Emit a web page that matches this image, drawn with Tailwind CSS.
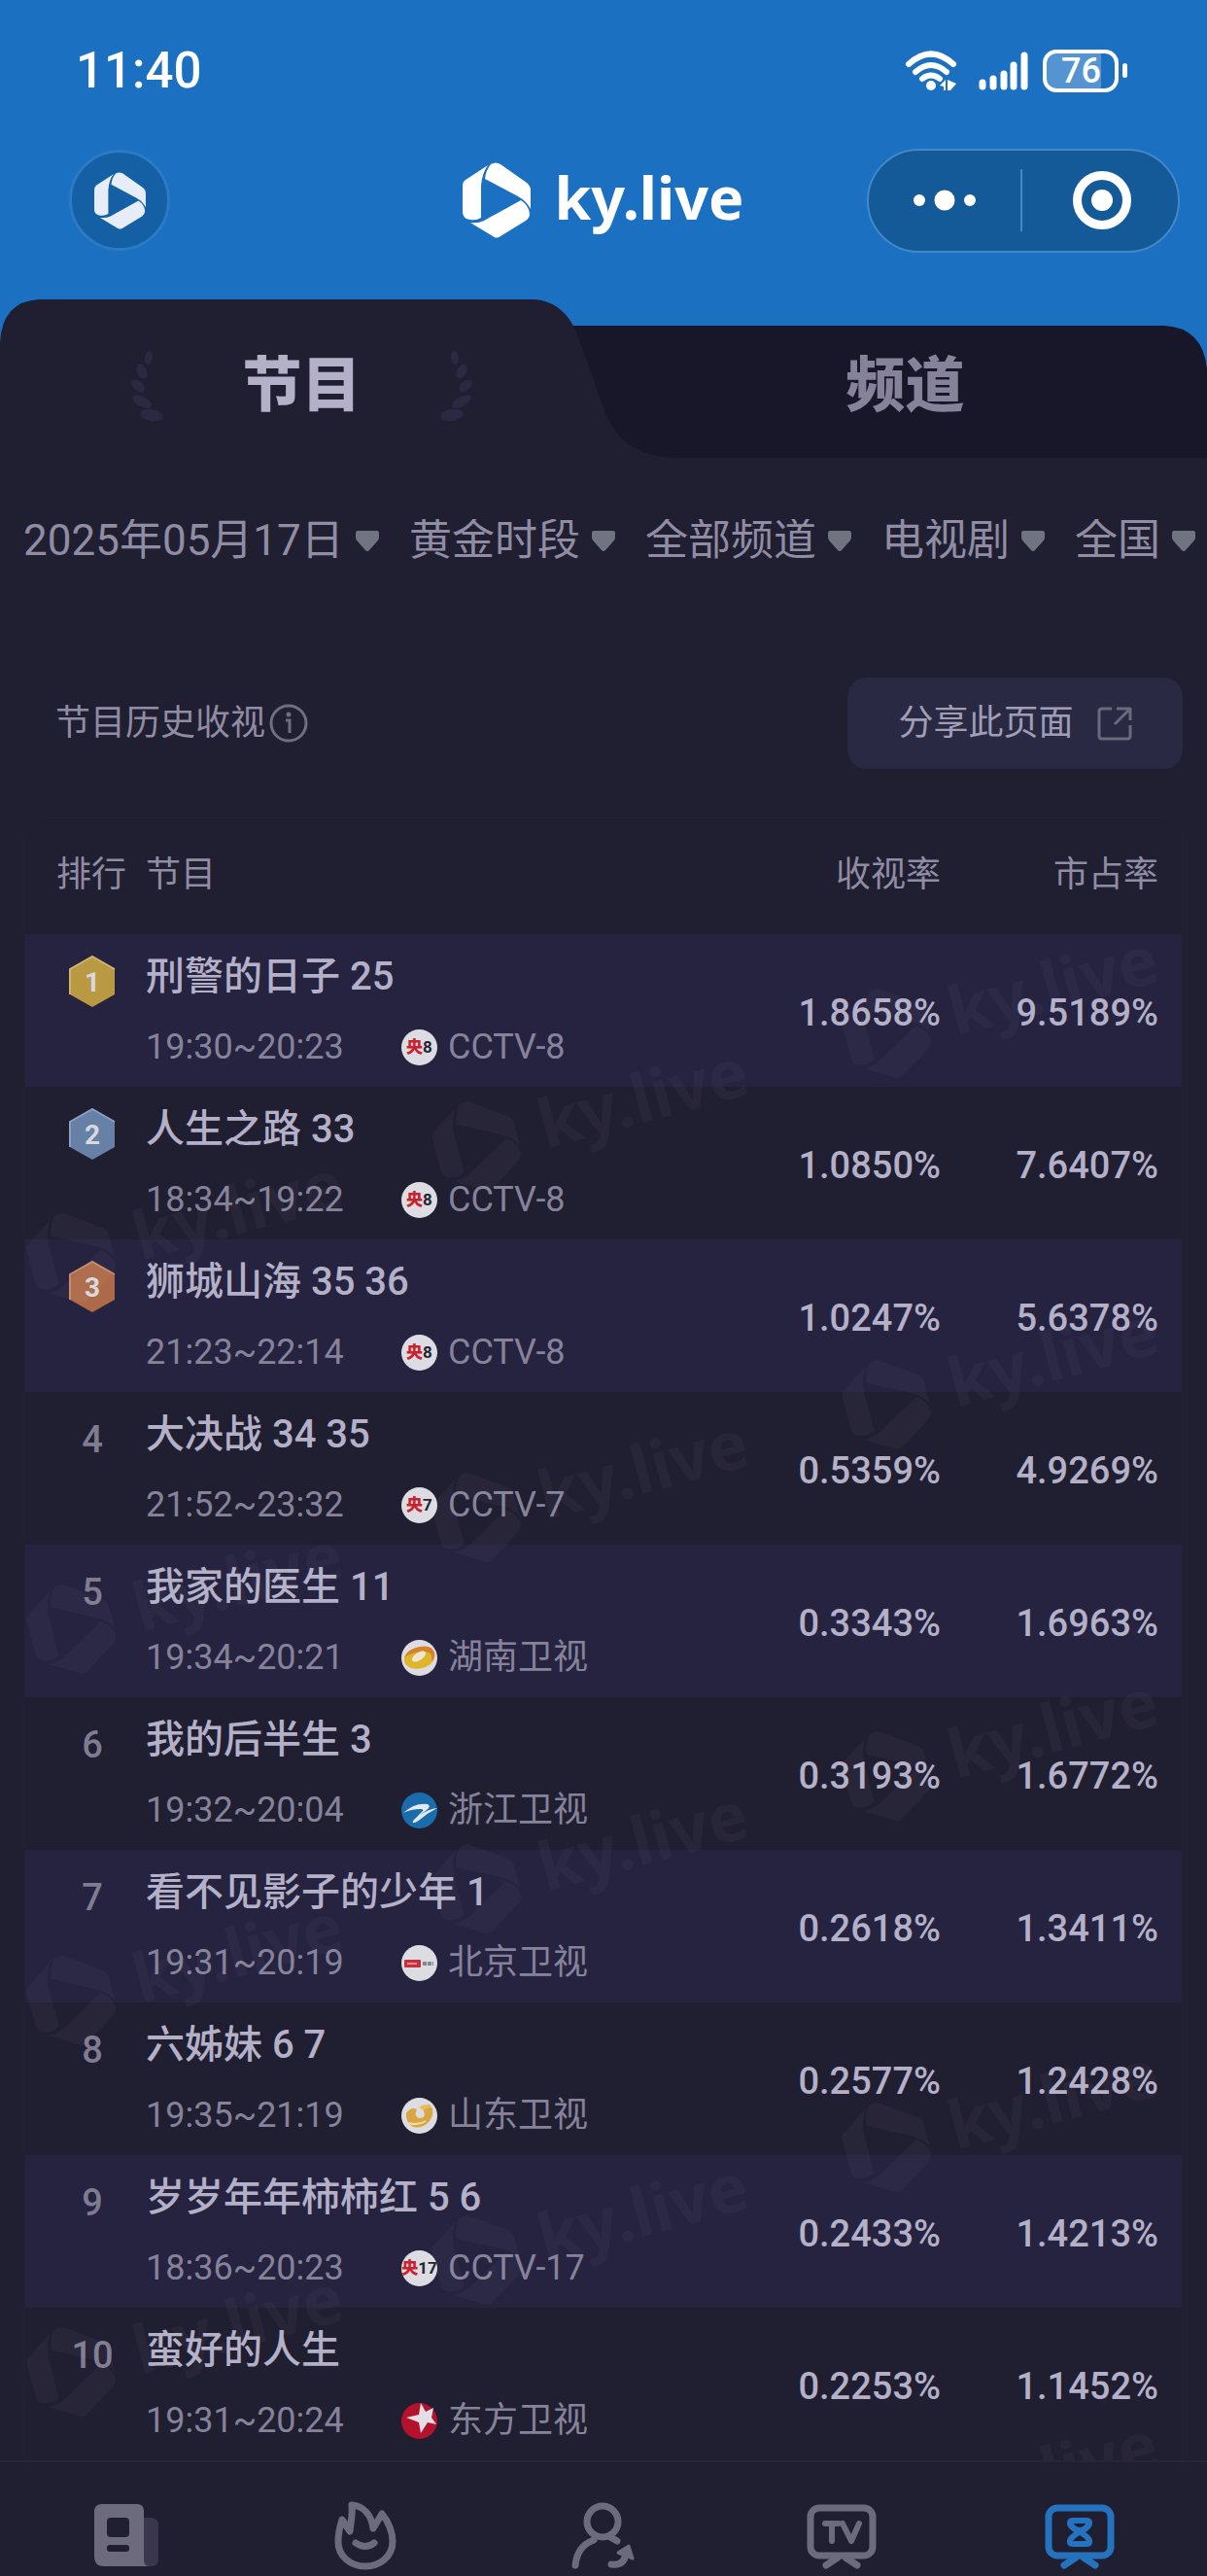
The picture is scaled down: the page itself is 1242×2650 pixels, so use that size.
<!DOCTYPE html>
<html lang="zh-CN">
<head>
<meta charset="utf-8">
<meta name="viewport" content="width=device-width, initial-scale=1">
<title>ky.live</title>
<script src="https://cdn.jsdelivr.net/npm/@tailwindcss/browser@4"></script>
</head>
<body class="bg-[#201e31] font-[Roboto,'Noto_Sans_CJK_SC',sans-serif] text-[#8f8ca4]">
<svg class="hidden" aria-hidden="true">
  <symbol id="logo" viewBox="0 0 70 78">
    <path d="M26 3 L3 18 Q0 20 0 24 V51 Q0 58 8 59 Q14 60 19 57 V24 Q20 11 26 3Z"/>
    <path d="M29 2 Q34 -1 39 2 L66 21 Q70 24 70 29 V48 Q66 40 57 35 L23 17 Q24 8 29 2Z"/>
    <path d="M60 39 Q68 44 69 53 Q69 57 65 60 L39 76 Q35 79 31 76 L8 62 Q16 63 22 60Z"/>
  </symbol>
  <symbol id="caret" viewBox="0 0 24 21"><path d="M2 0 H22 Q24 0 24 3 V7 Q24 9 22 11 L14 20 Q12 22 10 20 L2 11 Q0 9 0 7 V3 Q0 0 2 0Z"/></symbol>
</svg>

<header class="bg-[#1b70c2]">
  <div class="flex h-[145px] items-center justify-between pr-[82px] pl-[78px] text-white">
    <time class="text-[51px] leading-none font-medium">11:40</time>
    <div class="flex items-center gap-[14px]">
      <svg class="h-11 w-[62px]" viewBox="0 0 62 44" fill="none" stroke="#fff" stroke-width="6" stroke-linecap="round" role="img" aria-label="Wi-Fi">
        <path d="M4 15 Q27 -6 50 15"/><path d="M11 23 Q27 9 43 23"/><path d="M18 30 Q27 23 36 30"/>
        <circle cx="27" cy="37" r="5" fill="#fff" stroke="none"/>
        <path d="M36 37 L42 31 V42 H40 V38Z M44 31 L53 35 L47 42 H44Z" fill="#fff" stroke="none"/>
      </svg>
      <svg class="h-11 w-[52px]" viewBox="0 0 52 44" stroke="#fff" stroke-width="7" stroke-linecap="round" role="img" aria-label="信号">
        <path d="M4 34 V38 M15 30 V38 M26 25 V38 M36 16 V38 M47 6 V38"/>
      </svg>
      <div class="flex items-center gap-1">
        <div class="flex h-11 w-[78px] rounded-[14px] border-4 border-white">
          <div class="flex w-[56px] items-center justify-end rounded-l-[9px] bg-white/25 text-[36px] leading-none font-medium"><span>76</span></div>
        </div>
        <div class="h-[15px] w-[5px] rounded-full bg-white"></div>
      </div>
    </div>
  </div>

  <div class="grid h-[122px] grid-cols-[1fr_auto_1fr] items-center px-7">
    <button type="button" aria-label="主页" class="ml-[43px] flex size-[104px] items-center justify-center rounded-full border-[3px] border-[#2c7ac4] bg-[#1560a5]">
      <svg class="h-[59px] w-[53px] fill-[#e6edf7]"><use href="#logo"/></svg>
    </button>
    <div class="flex items-center gap-6">
      <svg class="h-[78px] w-[70px] fill-white"><use href="#logo"/></svg>
      <h1 class="pb-2 font-['Noto_Sans'] text-[61px] leading-none font-bold text-white">ky.live</h1>
    </div>
    <div class="flex h-[107px] w-[322px] items-center justify-self-end rounded-full border-2 border-[#4389c9] bg-[#145a98]">
      <button type="button" aria-label="更多" class="flex h-full flex-1 items-center justify-center">
        <svg class="h-6 w-16" viewBox="0 0 64 24" fill="#fff"><circle cx="6" cy="12" r="6"/><circle cx="32" cy="12" r="10.500"/><circle cx="58" cy="12" r="6"/></svg>
      </button>
      <span class="h-16 w-0.5 bg-[#4389c9]"></span>
      <button type="button" aria-label="关闭" class="flex h-full flex-1 items-center justify-center pl-1">
        <svg class="size-[60px]" viewBox="0 0 60 60"><circle cx="30" cy="30" r="25.500" fill="none" stroke="#fff" stroke-width="9"/><circle cx="30" cy="30" r="11" fill="#fff"/></svg>
      </button>
    </div>
  </div>

  <nav class="relative mt-[41px] h-[163px]" aria-label="榜单">
    <svg class="absolute inset-0 size-full" viewBox="0 0 1242 163" preserveAspectRatio="none" aria-hidden="true">
      <path d="M540 27 H1198 Q1238 29 1242 72 V163 H540Z" fill="#181629"/>
      <path d="M0 45 Q2 2 40 0 H550 Q576 2 590 27 C610 75 617 105 628 127 Q647 163 700 163 H0Z" fill="#201e31"/>
    </svg>
    <div class="relative grid h-full grid-cols-2 pt-4 text-[61px] leading-none font-black">
      <a href="#" aria-current="page" class="flex items-center justify-center gap-20 text-[#b3b0c8]">
        <svg class="h-[74px] w-[36px]" viewBox="0 0 36 74" fill="#2b2842">
          <g id="laurel"><ellipse cx="20" cy="7" rx="4" ry="7" transform="rotate(8 20 7)"/><ellipse cx="13" cy="21" rx="5" ry="8" transform="rotate(-25 13 21)"/><ellipse cx="9" cy="36" rx="5" ry="8" transform="rotate(-50 9 36)"/><ellipse cx="13" cy="52" rx="5" ry="11" transform="rotate(-62 13 52)"/><ellipse cx="23" cy="66" rx="12" ry="6" transform="rotate(8 23 66)"/></g>
        </svg>
        <span>节目</span>
        <svg class="h-[74px] w-[36px]" viewBox="0 0 36 74" fill="#2b2842"><use href="#laurel" transform="translate(36 0) scale(-1 1)"/></svg>
      </a>
      <a href="#" class="flex items-center justify-center text-[#85829a]">频道</a>
    </div>
  </nav>
</header>

<main>
  <form class="flex h-[170px] items-center justify-between pr-3 pl-6 text-[44px] leading-none">
    <label class="flex items-center gap-3"><select aria-label="日期" class="h-16 cursor-pointer appearance-none bg-transparent"><option>2025年05月17日</option></select><svg class="h-[21px] w-6 fill-[#707380]"><use href="#caret"/></svg></label>
    <label class="flex items-center gap-3"><select aria-label="时段" class="h-16 cursor-pointer appearance-none bg-transparent"><option>黄金时段</option></select><svg class="h-[21px] w-6 fill-[#707380]"><use href="#caret"/></svg></label>
    <label class="flex items-center gap-3"><select aria-label="频道" class="h-16 cursor-pointer appearance-none bg-transparent"><option>全部频道</option></select><svg class="h-[21px] w-6 fill-[#707380]"><use href="#caret"/></svg></label>
    <label class="flex items-center gap-3"><select aria-label="类型" class="h-16 cursor-pointer appearance-none bg-transparent"><option>电视剧</option></select><svg class="h-[21px] w-6 fill-[#707380]"><use href="#caret"/></svg></label>
    <label class="flex items-center gap-3"><select aria-label="地区" class="h-16 cursor-pointer appearance-none bg-transparent"><option>全国</option></select><svg class="h-[21px] w-6 fill-[#707380]"><use href="#caret"/></svg></label>
  </form>

  <div class="mt-14 flex h-[94px] items-center justify-between pr-[25px] pl-[57px]">
    <div class="flex items-center gap-1">
      <h2 class="text-[36px] leading-none">节目历史收视</h2>
      <button type="button" aria-label="说明"><svg class="size-10" viewBox="0 0 40 40" fill="none" stroke="#706d80" stroke-width="3"><circle cx="20" cy="20" r="18"/><path d="M17 17 H21 V30"/><circle cx="20" cy="11" r="2.500" fill="#706d80" stroke="none"/></svg></button>
    </div>
    <button type="button" class="flex h-full w-[345px] items-center justify-center gap-6 rounded-[20px] bg-[#2a2943] text-[36px] leading-none text-[#a09db6]">
      <span>分享此页面</span>
      <svg class="size-9" viewBox="0 0 36 36" fill="none" stroke="#6b697c" stroke-width="3" stroke-linejoin="round"><path d="M15 3 H5 Q2 3 2 6 V31 Q2 34 5 34 H31 Q34 34 34 31 V20"/><path d="M20 3 H34 V15 M34 3 L18 19"/></svg>
    </button>
  </div>

  <section class="relative mx-[25px] mt-[50px] overflow-hidden rounded-t-[20px] border-x border-t border-[#232136]">
    <table class="w-full table-fixed border-collapse text-[36px] leading-none">
      <colgroup><col class="w-[124px]"><col><col class="w-[220px]"><col class="w-[248px]"></colgroup>
      <thead>
        <tr class="h-[119px]">
          <th scope="col" class="pb-1 pl-8 text-left font-normal whitespace-nowrap">排行</th>
          <th scope="col" class="pb-1 text-left font-normal">节目</th>
          <th scope="col" class="pb-1 text-right font-normal">收视率</th>
          <th scope="col" class="pr-6 pb-1 text-right font-normal">市占率</th>
        </tr>
      </thead>
      <tbody id="rows"></tbody>
    </table>
    <div id="marks" class="pointer-events-none absolute inset-0 overflow-hidden" aria-hidden="true"></div>
  </section>
</main>

<nav class="grid h-[119px] grid-cols-5 items-center border-t-2 border-[#272538] px-2 pt-[34px] pb-[2px]" aria-label="主导航">
  <a href="#" aria-label="资讯" class="flex justify-center"><svg class="h-[72px] w-[72px]" viewBox="0 0 72 72"><path d="M50 18 H60 Q68 18 68 26 V60 Q68 68 60 68 H50Z" fill="#3a374c"/><path d="M10 4 H46 Q53 4 53 11 V62 Q53 67 58 68 H12 Q2 68 2 58 V12 Q2 4 10 4Z" fill="#6d6a7e"/><rect x="15" y="18" width="23" height="20" rx="4" fill="#201e31"/><rect x="15" y="46" width="23" height="7" rx="3" fill="#201e31"/></svg></a>
  <a href="#" aria-label="热门" class="flex justify-center"><svg class="h-[72px] w-[64px]" viewBox="0 0 64 72" fill="none" stroke="#6d6a7e" stroke-width="7" stroke-linecap="round" stroke-linejoin="round"><path d="M18 5 C30 6 38 15 40 29 L49 14 C56 22 60 34 60 42 C60 59 46 68 32 68 C16 68 4 57 4 43 C4 34 6 26 8 20 L16 32 C17 22 19 16 18 5Z"/><path d="M22 44 Q32 51 41 44"/></svg></a>
  <a href="#" aria-label="人物" class="flex justify-center"><svg class="h-[72px] w-[68px]" viewBox="0 0 68 72" fill="none" stroke="#6d6a7e" stroke-width="7" stroke-linecap="round"><circle cx="33" cy="22" r="16"/><path d="M5 67 Q7 47 24 41 M41 38 L48 42"/><path d="M42 66 Q55 68 57 55"/><path d="M49 54 L60 47 L64 60Z" fill="#6d6a7e" stroke-width="3" stroke-linejoin="round"/></svg></a>
  <a href="#" aria-label="电视" class="flex justify-center"><svg class="h-[72px] w-[72px]" viewBox="0 0 72 72" fill="none" stroke="#6d6a7e" stroke-width="7" stroke-linecap="round" stroke-linejoin="round"><rect x="4" y="8" width="64" height="49" rx="9"/><path d="M20 67 L32 59 M52 67 L40 59"/><path d="M19 24 H33 M26 24 V42 M37 24 L46 42 L54 24" stroke-width="6"/></svg></a>
  <a href="#" aria-label="收视" aria-current="page" class="flex justify-center"><svg class="h-[72px] w-[72px]" viewBox="0 0 72 72" fill="none" stroke="#2573be" stroke-width="7" stroke-linecap="round" stroke-linejoin="round"><rect x="4" y="8" width="64" height="49" rx="9"/><path d="M20 67 L32 59 M52 67 L40 59"/><path fill="#2573be" fill-rule="evenodd" stroke="none" d="M28 18 H44 Q50 19 49 25 Q48 29 42 33 Q48 37 49 41 Q50 47 44 48 H28 Q22 47 23 41 Q24 37 30 33 Q24 29 23 25 Q22 19 28 18Z M30 24 H42 Q41 27 36 28 Q31 27 30 24Z M29 42 H43 Q41 39 36 36 Q31 39 29 42Z"/></svg></a>
</nav>

<script>
const cctv = n => `<span class="flex size-[37px] items-center justify-center rounded-full bg-[#dedce3] text-[17px] leading-none font-bold text-[#26242e]"><b class="font-black text-[#c8222f]">央</b>${n}</span>`;
const icon = inner => `<svg class="size-[37px]" viewBox="0 0 37 37">${inner}</svg>`;
const icons = {
  hunan: icon('<circle cx="18.500" cy="18.500" r="18.500" fill="#dedce3"/><ellipse cx="18.500" cy="18.500" rx="16" ry="11" transform="rotate(-14 18 18)" fill="#dfb52c"/><path d="M3 18 Q7 9 19 7 Q31 5 34 13 Q35 18 31 22 Q33 13 25 12 Q12 12 3 18Z" fill="#d8812c"/><ellipse cx="18" cy="17" rx="8" ry="4" transform="rotate(-34 18 17)" fill="#efe6d2"/>'),
  zhejiang: icon('<circle cx="18.500" cy="18.500" r="18.500" fill="#1a6cab"/><path d="M2 21 Q14 10 27 12 Q31 14 26 18 L19 23 Q28 17 37 16 Q27 21 19 28 Q10 34 12 29 L22 19 Q23 17 20 17 Q10 17 2 21Z" fill="#e4e8f0"/>'),
  beijing: icon('<circle cx="18.500" cy="18.500" r="18.500" fill="#dedce3"/><rect x="3" y="15" width="17" height="8" rx="1" fill="#c5303a"/><path d="M6 19 H16" stroke="#df8b90" stroke-width="2"/><path d="M22 19 H33" stroke="#86848c" stroke-width="4" stroke-dasharray="4 1"/>'),
  shandong: icon('<circle cx="18.500" cy="18.500" r="18.500" fill="#dedce3"/><path d="M5 16 Q10 9 16 12 Q12 20 19 21 Q26 21 23 14 Q20 8 29 7 Q36 14 29 24 Q22 32 12 30 Q4 25 5 16Z" fill="#d9a640"/><path d="M18 10 Q25 4 32 11 Q26 9 23 13Z" fill="#e6be55"/><path d="M8 26 Q17 29 25 24" stroke="#f0dca3" stroke-width="2" fill="none"/>'),
  dongfang: icon('<circle cx="18.500" cy="18.500" r="18.500" fill="#b5122d"/><path d="M20 0 L25 9 L33 5 L31 15 L36 22 L27 20 L20 31 L18 20 L5 15 L18 12Z" fill="#e3dfe6"/>')
};
const badge = (n, fill, edge) => `<svg class="h-[54px] w-[48px]" viewBox="0 0 48 54" role="img" aria-label="${n}"><path d="M24 1 L47 14 V40 L24 53 L1 40 V14Z" fill="${fill}"/><path d="M1 40 V14 L24 1 L47 14" fill="none" stroke="${edge}" stroke-width="2"/><text x="24" y="37" text-anchor="middle" font-size="28" font-weight="700" fill="#dad8de">${n}</text></svg>`;
const badges = {1: badge(1, '#b99942', '#cdb66c'), 2: badge(2, '#6680a6', '#8b9fc0'), 3: badge(3, '#ad6a49', '#c68b70')};
const data = [
  ['刑警的日子 25', '19:30~20:23', cctv(8), 'CCTV-8', '1.8658%', '9.5189%'],
  ['人生之路 33', '18:34~19:22', cctv(8), 'CCTV-8', '1.0850%', '7.6407%'],
  ['狮城山海 35 36', '21:23~22:14', cctv(8), 'CCTV-8', '1.0247%', '5.6378%'],
  ['大决战 34 35', '21:52~23:32', cctv(7), 'CCTV-7', '0.5359%', '4.9269%'],
  ['我家的医生 11', '19:34~20:21', icons.hunan, '湖南卫视', '0.3343%', '1.6963%'],
  ['我的后半生 3', '19:32~20:04', icons.zhejiang, '浙江卫视', '0.3193%', '1.6772%'],
  ['看不见影子的少年 1', '19:31~20:19', icons.beijing, '北京卫视', '0.2618%', '1.3411%'],
  ['六姊妹 6 7', '19:35~21:19', icons.shandong, '山东卫视', '0.2577%', '1.2428%'],
  ['岁岁年年柿柿红 5 6', '18:36~20:23', cctv(17), 'CCTV-17', '0.2433%', '1.4213%'],
  ['蛮好的人生', '19:31~20:24', icons.dongfang, '东方卫视', '0.2253%', '1.1452%']
];
document.getElementById('rows').innerHTML = data.map((d, i) => `
  <tr class="h-[157px] odd:bg-[#252340]">
    <td class="pt-4 pl-[14px] align-top"><div class="flex h-[66px] items-center justify-center text-[38px] font-medium text-[#7f7c92]">${badges[i + 1] || i + 1}</div></td>
    <td class="pt-4 align-top">
      <div class="flex h-14 items-center text-[40px] font-medium whitespace-nowrap text-[#b3b0c8]">${d[0]}</div>
      <div class="mt-6 flex h-10 items-center whitespace-nowrap text-[#85829a]"><span class="w-[263px]">${d[1]}</span>${d[2]}<span class="pl-[11px]">${d[3]}</span></div>
    </td>
    <td class="pt-1 text-right text-[38px] font-medium text-[#b3b0c8]">${d[4]}</td>
    <td class="pt-1 pr-6 text-right text-[38px] font-medium text-[#b3b0c8]">${d[5]}</td>
  </tr>`).join('');

// Tiled diagonal watermark: three staggered columns, repeated down the table.
const marks = [];
for (let r = 0; r < 5; r++) {
  [[887, 221], [465, 337], [48, 452]].forEach(([x, y]) => marks.push([x, y + r * 382]));
}
document.getElementById('marks').innerHTML = marks.map(([x, y]) => `
  <div class="absolute flex origin-[43px_48px] -rotate-15 items-center gap-6 text-white/3" style="left:${x - 43}px;top:${y - 48}px">
    <svg class="h-24 w-[86px] fill-current"><use href="#logo"/></svg><span class="pb-3 font-['Noto_Sans'] text-[69px] leading-none font-bold">ky.live</span>
  </div>`).join('');
</script>
</body>
</html>
